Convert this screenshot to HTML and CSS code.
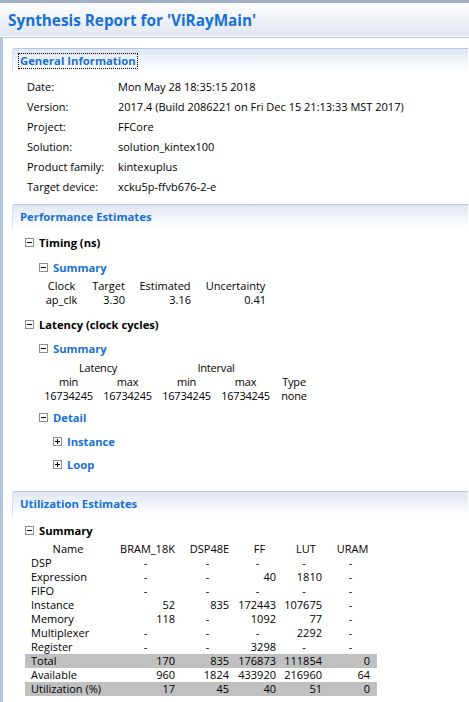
FILE: index.html
```html
<!DOCTYPE html>
<html>
<head>
<meta charset="utf-8">
<title>Synthesis Report</title>
<link rel="stylesheet" href="styles.css">
</head>
<body>
<div class="topbar"></div>
<header class="titlebar"><h1 class="title">Synthesis Report for 'ViRayMain'</h1></header>
<div class="divider"></div>
<main class="content">

  <section class="section">
    <div class="sec-head"><span class="sec-title focused">General Information</span></div>
    <div class="info">
      <div class="info-row"><span class="info-label">Date:</span><span>Mon May 28 18:35:15 2018</span></div>
      <div class="info-row"><span class="info-label">Version:</span><span>2017.4 (Build 2086221 on Fri Dec 15 21:13:33 MST 2017)</span></div>
      <div class="info-row"><span class="info-label">Project:</span><span>FFCore</span></div>
      <div class="info-row"><span class="info-label">Solution:</span><span>solution_kintex100</span></div>
      <div class="info-row"><span class="info-label">Product family:</span><span>kintexuplus</span></div>
      <div class="info-row"><span class="info-label">Target device:</span><span>xcku5p-ffvb676-2-e</span></div>
    </div>
  </section>

  <section class="section sec-perf">
    <div class="sec-head"><span class="sec-title">Performance Estimates</span></div>
    <div class="sec-body">
      <div class="node node-timing">
        <svg class="tw" width="9" height="9" viewBox="0 0 9 9"><rect x="0.5" y="0.5" width="8" height="8" fill="#fff" stroke="#8f8f8f"/><path d="M2 4.5h5" stroke="#000"/></svg>
        <span class="node-title">Timing (ns)</span>
      </div>
      <div class="lvl2">
        <div class="node node-sum1">
          <svg class="tw" width="9" height="9" viewBox="0 0 9 9"><rect x="0.5" y="0.5" width="8" height="8" fill="#fff" stroke="#8f8f8f"/><path d="M2 4.5h5" stroke="#000"/></svg>
          <span class="node-link">Summary</span>
        </div>
        <table class="timing">
          <tr><th class="c-clock">Clock</th><th class="c-target">Target</th><th class="c-est">Estimated</th><th class="c-unc">Uncertainty</th></tr>
          <tr><td class="center">ap_clk</td><td>3.30</td><td>3.16</td><td>0.41</td></tr>
        </table>
      </div>

      <div class="node node-latency">
        <svg class="tw" width="9" height="9" viewBox="0 0 9 9"><rect x="0.5" y="0.5" width="8" height="8" fill="#fff" stroke="#8f8f8f"/><path d="M2 4.5h5" stroke="#000"/></svg>
        <span class="node-title">Latency (clock cycles)</span>
      </div>
      <div class="lvl2">
        <div class="node node-sum2">
          <svg class="tw" width="9" height="9" viewBox="0 0 9 9"><rect x="0.5" y="0.5" width="8" height="8" fill="#fff" stroke="#8f8f8f"/><path d="M2 4.5h5" stroke="#000"/></svg>
          <span class="node-link">Summary</span>
        </div>
        <table class="latency">
          <colgroup><col class="w-lat"><col class="w-lat"><col class="w-lat"><col class="w-lat"><col class="w-type"></colgroup>
          <tr><th colspan="2">Latency</th><th colspan="2">Interval</th><th></th></tr>
          <tr><th>min</th><th>max</th><th>min</th><th>max</th><th>Type</th></tr>
          <tr><td>16734245</td><td>16734245</td><td>16734245</td><td>16734245</td><td>none</td></tr>
        </table>
        <div class="node node-detail">
          <svg class="tw" width="9" height="9" viewBox="0 0 9 9"><rect x="0.5" y="0.5" width="8" height="8" fill="#fff" stroke="#8f8f8f"/><path d="M2 4.5h5" stroke="#000"/></svg>
          <span class="node-link">Detail</span>
        </div>
        <div class="lvl3">
          <div class="node node-inst">
            <svg class="tw" width="9" height="9" viewBox="0 0 9 9"><rect x="0.5" y="0.5" width="8" height="8" fill="#fff" stroke="#8f8f8f"/><path d="M2 4.5h5M4.5 2v5" stroke="#000"/></svg>
            <span class="node-link">Instance</span>
          </div>
          <div class="node node-loop">
            <svg class="tw" width="9" height="9" viewBox="0 0 9 9"><rect x="0.5" y="0.5" width="8" height="8" fill="#fff" stroke="#8f8f8f"/><path d="M2 4.5h5M4.5 2v5" stroke="#000"/></svg>
            <span class="node-link">Loop</span>
          </div>
        </div>
      </div>
    </div>
  </section>

  <section class="section sec-util">
    <div class="sec-head"><span class="sec-title">Utilization Estimates</span></div>
    <div class="sec-body">
      <div class="node node-usum">
        <svg class="tw" width="9" height="9" viewBox="0 0 9 9"><rect x="0.5" y="0.5" width="8" height="8" fill="#fff" stroke="#8f8f8f"/><path d="M2 4.5h5" stroke="#000"/></svg>
        <span class="node-title">Summary</span>
      </div>
      <table class="util">
        <colgroup><col class="w-name"><col class="w-bram"><col class="w-dsp"><col class="w-ff"><col class="w-lut"><col class="w-uram"></colgroup>
        <tr><th>Name</th><th>BRAM_18K</th><th>DSP48E</th><th>FF</th><th>LUT</th><th>URAM</th></tr>
        <tr><td class="name">DSP</td><td class="dash">-</td><td class="dash">-</td><td class="dash">-</td><td class="dash">-</td><td class="dash">-</td></tr>
        <tr><td class="name">Expression</td><td class="dash">-</td><td class="dash">-</td><td>40</td><td>1810</td><td class="dash">-</td></tr>
        <tr><td class="name">FIFO</td><td class="dash">-</td><td class="dash">-</td><td class="dash">-</td><td class="dash">-</td><td class="dash">-</td></tr>
        <tr><td class="name">Instance</td><td>52</td><td>835</td><td>172443</td><td>107675</td><td class="dash">-</td></tr>
        <tr><td class="name">Memory</td><td>118</td><td class="dash">-</td><td>1092</td><td>77</td><td class="dash">-</td></tr>
        <tr><td class="name">Multiplexer</td><td class="dash">-</td><td class="dash">-</td><td class="dash">-</td><td>2292</td><td class="dash">-</td></tr>
        <tr><td class="name">Register</td><td class="dash">-</td><td class="dash">-</td><td>3298</td><td class="dash">-</td><td class="dash">-</td></tr>
        <tr class="shade"><td class="name">Total</td><td>170</td><td>835</td><td>176873</td><td>111854</td><td>0</td></tr>
        <tr><td class="name">Available</td><td>960</td><td>1824</td><td>433920</td><td>216960</td><td>64</td></tr>
        <tr class="shade"><td class="name">Utilization (%)</td><td>17</td><td>45</td><td>40</td><td>51</td><td>0</td></tr>
      </table>
    </div>
  </section>

</main>
</body>
</html>
```

FILE: styles.css
```css
html, body {
  margin: 0;
  padding: 0;
  background: #fff;
}
body {
  font-family: "Open Sans", "Noto Sans", sans-serif;
  font-size: 11px;
  color: #000;
}
.topbar {
  height: 3px;
  background: #a2b1c6;
}
.titlebar {
  height: 33px;
  display: flex;
  align-items: center;
  padding-left: 8px;
  background: linear-gradient(#fdfdfe, #e1e7f1);
}
.title {
  margin: 0;
  font-size: 15.3px;
  font-weight: 700;
  color: #1670d6;
}
.divider {
  height: 1px;
  margin-top: 1px;
  background: #b5c6df;
}
.content {
  border-left: 3px solid #b1c4de;
  padding: 10px 1px 20px 9px;
}
.section + .section {
  margin-top: 7px;
}
.section.sec-util {
  margin-top: 17px;
}
.sec-head {
  height: 23px;
  display: flex;
  align-items: center;
  padding-left: 5px;
  border-top: 1px solid #b7c8e2;
  border-left: 1px solid #d9e2ef;
  border-top-left-radius: 3px;
  background: linear-gradient(#dfe6f2, #ffffff);
}
.sec-title {
  display: inline-block;
  line-height: 14px;
  padding: 0 1px;
  border: 1px solid transparent;
  font-size: 11.3px;
  font-weight: 700;
  color: #1670d6;
}
.sec-title.focused {
  border: 1px dotted #000;
}
.info {
  margin-top: 5px;
  padding-left: 15px;
}
.info-row {
  display: flex;
  height: 20px;
  line-height: 20px;
}
.info-label {
  width: 91px;
}
.sec-body {
  padding-left: 13px;
}
.node {
  display: flex;
  align-items: center;
  gap: 5px;
  height: 20px;
}
.tw {
  flex: none;
  display: block;
}
.node-title {
  font-size: 11.2px;
  font-weight: 700;
  color: #000;
}
.node-link {
  font-size: 11.2px;
  font-weight: 700;
  color: #1670d6;
}
.lvl2 {
  padding-left: 14px;
}
.lvl3 {
  padding-left: 14px;
}
.node-timing { margin-top: 4px; }
.node-sum1 { margin-top: 5px; }
.node-latency { margin-top: 7px; }
.node-sum2 { margin-top: 4px; }
.node-detail { margin-top: 4px; }
.node-inst { margin-top: 4px; }
.node-loop { margin-top: 3px; }
.node-usum { margin-top: 5px; }

table {
  border-collapse: collapse;
  font-size: 11px;
}
th {
  font-weight: 400;
}
.timing {
  margin-top: 2px;
  margin-left: -1px;
}
.timing th, .timing td {
  padding: 0 7px;
  line-height: 14px;
  height: 14px;
  text-align: right;
}
.timing th {
  text-align: center;
}
.timing td.center {
  text-align: center;
}
.c-clock { width: 33px; }
.c-target { width: 33px; }
.c-est { width: 52px; }
.c-unc { width: 61px; }

.latency {
  table-layout: fixed;
  width: 274px;
  margin-top: 3px;
  letter-spacing: -0.2px;
}
.w-lat { width: 59px; }
.w-type { width: 38px; }
.latency th, .latency td {
  padding: 0;
  line-height: 14px;
  height: 14px;
  text-align: center;
  white-space: nowrap;
}

.util {
  table-layout: fixed;
  width: 352px;
  margin-top: 2px;
}
.w-name { width: 86px; }
.w-bram { width: 73px; }
.w-dsp { width: 51px; }
.w-ff { width: 49px; }
.w-lut { width: 44px; }
.w-uram { width: 49px; }
.util th, .util td {
  padding: 0;
  line-height: 14px;
  height: 14px;
  text-align: right;
  white-space: nowrap;
}
.util th {
  text-align: center;
}
.util td.name {
  text-align: left;
  padding-left: 6px;
}
.util td:nth-child(2) { padding-right: 9px; }
.util td:nth-child(3) { padding-right: 6px; }
.util td:nth-child(4) { padding-right: 8px; }
.util td:nth-child(5) { padding-right: 6px; }
.util td:nth-child(6) { padding-right: 7px; }
.util td.dash {
  text-align: center;
  padding-right: 4px;
}
.util tr.shade td {
  background: #c0c0c0;
}
```
